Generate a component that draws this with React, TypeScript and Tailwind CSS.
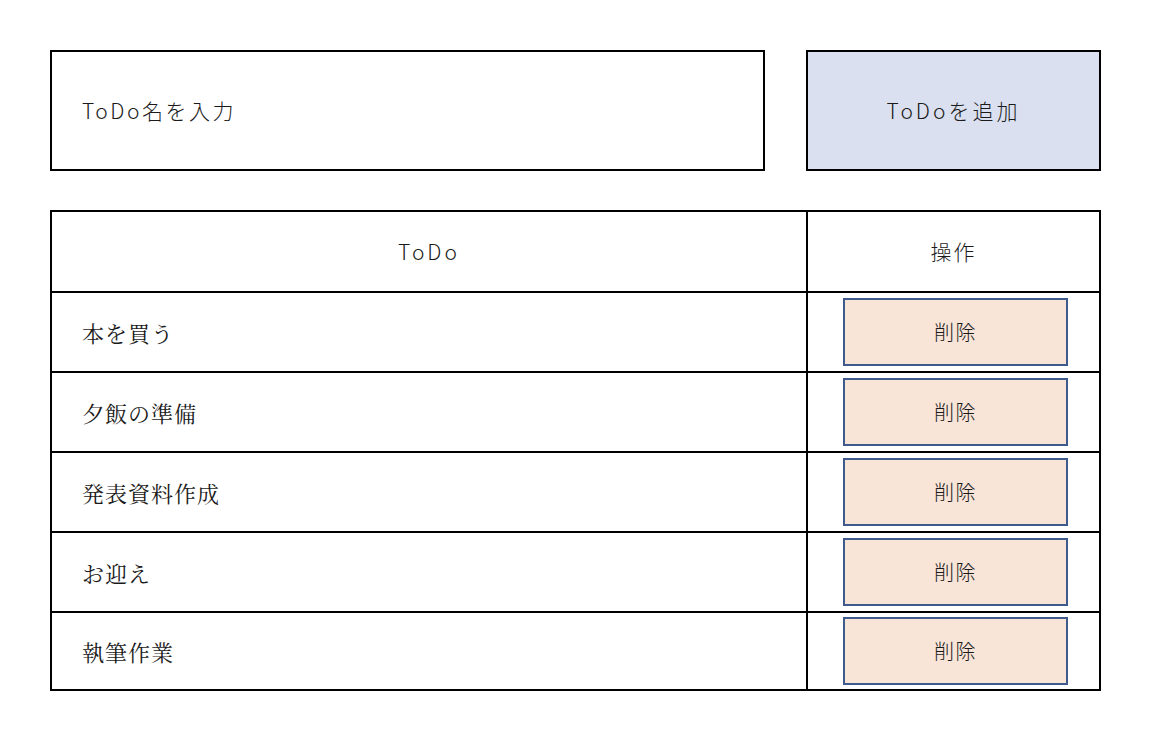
import React from "react";

const todos = ["本を買う", "夕飯の準備", "発表資料作成", "お迎え", "執筆作業"];

export default function App() {
  const sans = { fontFamily: '"Noto Sans CJK JP", "Noto Sans", sans-serif' };
  const serif = { fontFamily: '"Noto Serif CJK JP", "Noto Sans CJK JP", serif' };
  return (
    <div className="min-h-[732px] bg-white pl-[50px] pt-[50px] font-light text-[#1a1a1a]" style={sans}>
      <div className="flex w-[1051px] gap-[41px]">
        <div className="flex h-[121px] w-[715px] items-center border-2 border-black pl-[30px]">
          <input
            className="w-full bg-transparent text-[21px] font-light tracking-[2.5px] outline-none placeholder:text-[#1a1a1a]"
            placeholder="ToDo名を入力"
          />
        </div>
        <button className="flex h-[121px] w-[295px] items-center justify-center border-2 border-black bg-[#dae0f0] text-[21px] tracking-[3px]">
          ToDoを追加
        </button>
      </div>

      <div className="mt-[39px] w-[1051px] border-2 border-black">
        <div className="grid h-[79px] grid-cols-[756px_1fr]">
          <div className="flex items-center justify-center border-r-2 border-black text-[21px] tracking-[3px]">ToDo</div>
          <div className="flex items-center justify-center text-[21px] tracking-[2px]">操作</div>
        </div>
        {todos.map((t, i) => (
          <div
            key={t}
            className={`grid grid-cols-[756px_1fr] border-t-2 border-black ${i === todos.length - 1 ? "h-[78px]" : "h-[80px]"}`}
          >
            <div className="flex items-center border-r-2 border-black pl-[30px] text-[22px] font-normal tracking-[1px]" style={serif}>
              {t}
            </div>
            <div className="flex items-center justify-center pl-[4px]">
              <button className="flex h-[68px] w-[225px] items-center justify-center border-2 border-[#3f5a8c] bg-[#f8e5d8] text-[20px] tracking-[1.5px]">
                削除
              </button>
            </div>
          </div>
        ))}
      </div>
    </div>
  );
}
